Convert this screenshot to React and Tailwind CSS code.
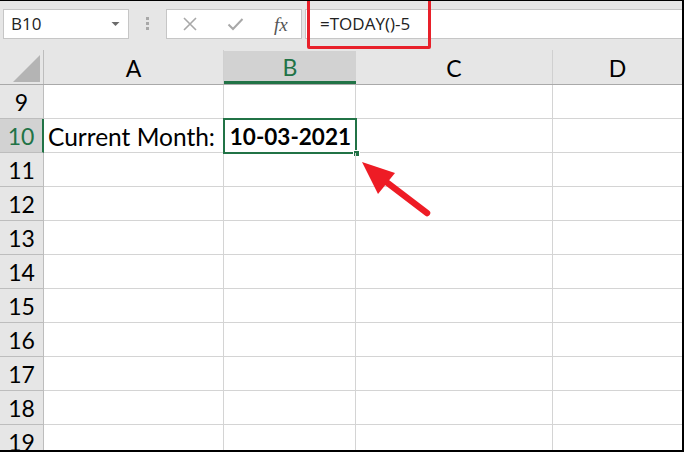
import React from "react";

const rows = [9, 10, 11, 12, 13, 14, 15, 16, 17, 18, 19];

function RowHeader({ n, active }) {
  return (
    <div
      className={
        "w-[44px] shrink-0 h-full flex items-center justify-center border-r border-b " +
        (active
          ? "bg-[#d2d2d2] border-r-[#217346] border-r-2 border-b-[#bdbdbd] text-[#217346]"
          : "bg-[#e6e6e6] border-r-[#bdbdbd] border-b-[#bdbdbd] text-[#000]")
      }
      style={{ fontFamily: "Lato, 'Noto Sans', sans-serif", fontSize: 23 }}
    >
      <span className="pt-[2px]">{n}</span>
    </div>
  );
}

export default function App() {
  const font = { fontFamily: "Lato, 'Noto Sans', sans-serif" };
  return (
    <div className="w-[684px] h-[452px] overflow-hidden bg-white border-t border-t-black border-r-2 border-r-black border-b-2 border-b-black relative">
      {/* Top formula bar area */}
      <div className="h-[49px] bg-[#e6e6e6] flex items-start pt-[8px]">
        {/* Name box */}
        <div className="ml-[3px] w-[126px] h-[30px] bg-white border border-[#c6c6c6] flex items-center justify-between pl-[7px] pr-[8px]">
          <span className="text-[#222] text-[17px]" style={{ fontFamily: "'Open Sans', 'Noto Sans', sans-serif" }}>B10</span>
          <svg width="9" height="6" viewBox="0 0 9 6">
            <path d="M0.5 1 H8.5 L4.5 5 Z" fill="#6b6b6b" />
          </svg>
        </div>
        {/* dots */}
        <div className="ml-[17px] mt-[8px] flex flex-col gap-[2px]">
          <div className="w-[3px] h-[3px] bg-[#a8a8a8]" />
          <div className="w-[3px] h-[3px] bg-[#a8a8a8]" />
          <div className="w-[3px] h-[3px] bg-[#a8a8a8]" />
        </div>
        {/* buttons */}
        <div className="ml-[17px] w-[136px] h-[30px] bg-white border border-[#c6c6c6] flex items-center">
          <svg className="ml-[15px]" width="16" height="16" viewBox="0 0 16 16">
            <path d="M2 2 L14 14 M14 2 L2 14" stroke="#a8a8a8" strokeWidth="1.6" fill="none" />
          </svg>
          <svg className="ml-[29px]" width="17" height="14" viewBox="0 0 17 14">
            <path d="M1.5 7.5 L6 12 L15.5 2" stroke="#a8a8a8" strokeWidth="2" fill="none" />
          </svg>
          <span
            className="ml-[30px] text-[#555] text-[19px] italic leading-none"
            style={{ fontFamily: "'Liberation Serif', serif" }}
          >
            fx
          </span>
        </div>
        {/* formula input */}
        <div className="ml-[3px] flex-1 h-[30px] bg-white border-y border-l border-[#c6c6c6] flex items-center pl-[14px]">
          <span className="text-[#222] text-[17px]" style={{ fontFamily: "'Open Sans', 'Noto Sans', sans-serif" }}>=TODAY()-5</span>
        </div>
      </div>

      {/* Column header */}
      <div className="h-[35px] flex bg-[#e6e6e6] border-b border-b-[#a9a9a9]" style={font}>
        <div className="w-[44px] shrink-0 border-r border-r-[#bdbdbd] flex items-end justify-end pr-[3px] pb-[2px]">
          <svg width="27" height="27" viewBox="0 0 27 27">
            <path d="M27 0 V27 H0 Z" fill="#b4b4b4" />
          </svg>
        </div>
        <div className="w-[180px] shrink-0 border-r border-r-[#d0d0d0] flex items-center justify-center text-[23px] text-black pt-[3px]">A</div>
        <div className="w-[132px] shrink-0 mt-[1px] bg-[#d2d2d2] border-b-[3px] border-b-[#217346] flex items-center justify-center text-[23px] text-[#217346] pt-[3px]">B</div>
        <div className="w-[197px] shrink-0 border-r border-r-[#d0d0d0] flex items-center justify-center text-[23px] text-black pt-[3px]">C</div>
        <div className="flex-1 flex items-center justify-center text-[23px] text-black pt-[3px]">D</div>
      </div>

      {/* Rows */}
      {rows.map((n) => (
        <div key={n} className="h-[34px] flex">
          <RowHeader n={n} active={n === 10} />
          <div className="w-[180px] shrink-0 h-full border-r border-b border-[#d4d4d4] flex items-center pl-[4px]" style={font}>
            {n === 10 && <span className="text-[24.5px] text-black pt-[3px]">Current Month:</span>}
          </div>
          <div className="w-[132px] shrink-0 h-full border-r border-b border-[#d4d4d4] relative flex items-center justify-end pr-[4px]" style={font}>
            {n === 10 && (
              <>
                <span className="text-[22.5px] font-bold text-black pt-[3px]">10-03-2021</span>
                <div className="absolute -left-[1px] -top-[1px] -right-[2px] -bottom-[2px] border-2 border-[#217346]" />
                <div className="absolute -right-[5px] -bottom-[5px] w-[7px] h-[7px] bg-[#217346] border border-white" />
              </>
            )}
          </div>
          <div className="w-[197px] shrink-0 h-full border-r border-b border-[#d4d4d4]" />
          <div className="flex-1 h-full border-b border-[#d4d4d4]" />
        </div>
      ))}

      {/* Red highlight box */}
      <div className="absolute left-[307px] -top-[3px] w-[124px] h-[51px] border-[3px] border-[#e8202a] rounded-[2px]" />

      {/* Red arrow */}
      <svg className="absolute left-0 top-0" width="684" height="452" viewBox="0 0 684 452" style={{ pointerEvents: "none" }}>
        <line x1="427" y1="212" x2="385" y2="180" stroke="#ee1c25" strokeWidth="6.5" strokeLinecap="round" />
        <path d="M362 161 L395 172 L378 193 Z" fill="#ee1c25" />
      </svg>
    </div>
  );
}
